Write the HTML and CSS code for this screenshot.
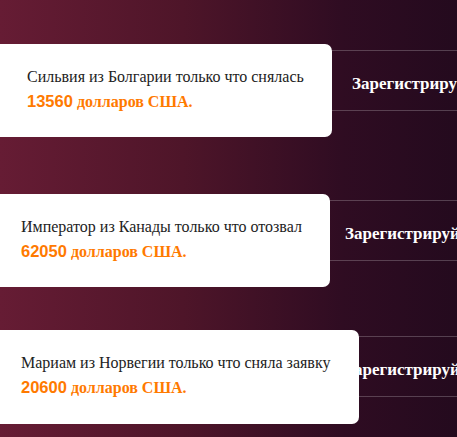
FILE: index.html
```html
<!DOCTYPE html>
<html lang="ru">
<head>
<meta charset="utf-8">
<title>Уведомления</title>
<link rel="stylesheet" href="styles.css">
</head>
<body>
<div class="feed">
  <div class="row row-1">
    <div class="band"><span class="band-text">Зарегистрируйтесь</span></div>
    <div class="card card-1">
      <p class="msg">Сильвия из Болгарии только что снялась</p>
      <p class="sum"><span class="num">13560</span> <span class="cur">долларов США.</span></p>
    </div>
  </div>
  <div class="row row-2">
    <div class="band"><span class="band-text band-text-2">Зарегистрируйтесь</span></div>
    <div class="card card-2">
      <p class="msg">Император из Канады только что отозвал</p>
      <p class="sum"><span class="num">62050</span> <span class="cur">долларов США.</span></p>
    </div>
  </div>
  <div class="row row-3">
    <div class="band"><span class="band-text band-text-2">Зарегистрируйтесь</span></div>
    <div class="card card-3">
      <p class="msg">Мариам из Норвегии только что сняла заявку</p>
      <p class="sum"><span class="num">20600</span> <span class="cur">долларов США.</span></p>
    </div>
  </div>
</div>
</body>
</html>
```

FILE: styles.css
```css
html, body {
  margin: 0;
  padding: 0;
  height: 100%;
}
body {
  width: 457px;
  height: 437px;
  overflow: hidden;
  background: linear-gradient(90deg, #661c34 0%, #4e1529 40%, #2f0c22 75%, #240a1e 100%);
  font-family: "Liberation Serif", "Times New Roman", serif;
}
.feed {
  display: flex;
  flex-direction: column;
  padding-top: 44px;
}
.row {
  display: grid;
}
.row-2 { margin-top: 57px; }
.row-3 { margin-top: 43px; }
.band, .card {
  grid-area: 1 / 1;
}
.band {
  margin-top: 6px;
  height: 59px;
  border-top: 1px solid rgba(255, 255, 255, 0.22);
  border-bottom: 1px solid rgba(255, 255, 255, 0.22);
  display: flex;
  align-items: center;
  white-space: nowrap;
  overflow: hidden;
}
.band-text {
  color: #ffffff;
  font-family: "Liberation Serif", "Times New Roman", serif;
  font-size: 17px;
  font-weight: bold;
  padding-left: 352px;
  padding-top: 6px;
}
.band-text-2 {
  padding-left: 345px;
}
.card {
  background: #ffffff;
  border-radius: 0 7px 7px 0;
  height: 93px;
  box-sizing: border-box;
  padding: 23px 0 0 21px;
  justify-self: start;
}
.card-1 { width: 332px; padding-left: 27px; }
.card-2 { width: 330px; }
.card-3 { width: 359px; height: 94px; }
.msg {
  margin: 0;
  font-family: "Liberation Serif", "Times New Roman", serif;
  font-size: 16px;
  line-height: 19px;
  color: #222222;
  white-space: nowrap;
}
.sum {
  margin: 5px 0 0;
  line-height: 20px;
  color: #ff7a00;
  white-space: nowrap;
}
.num {
  font-family: "Liberation Sans", Arial, sans-serif;
  font-weight: bold;
  font-size: 16.5px;
}
.cur {
  font-family: "Liberation Serif", "Times New Roman", serif;
  font-weight: bold;
  font-size: 16px;
}
```
